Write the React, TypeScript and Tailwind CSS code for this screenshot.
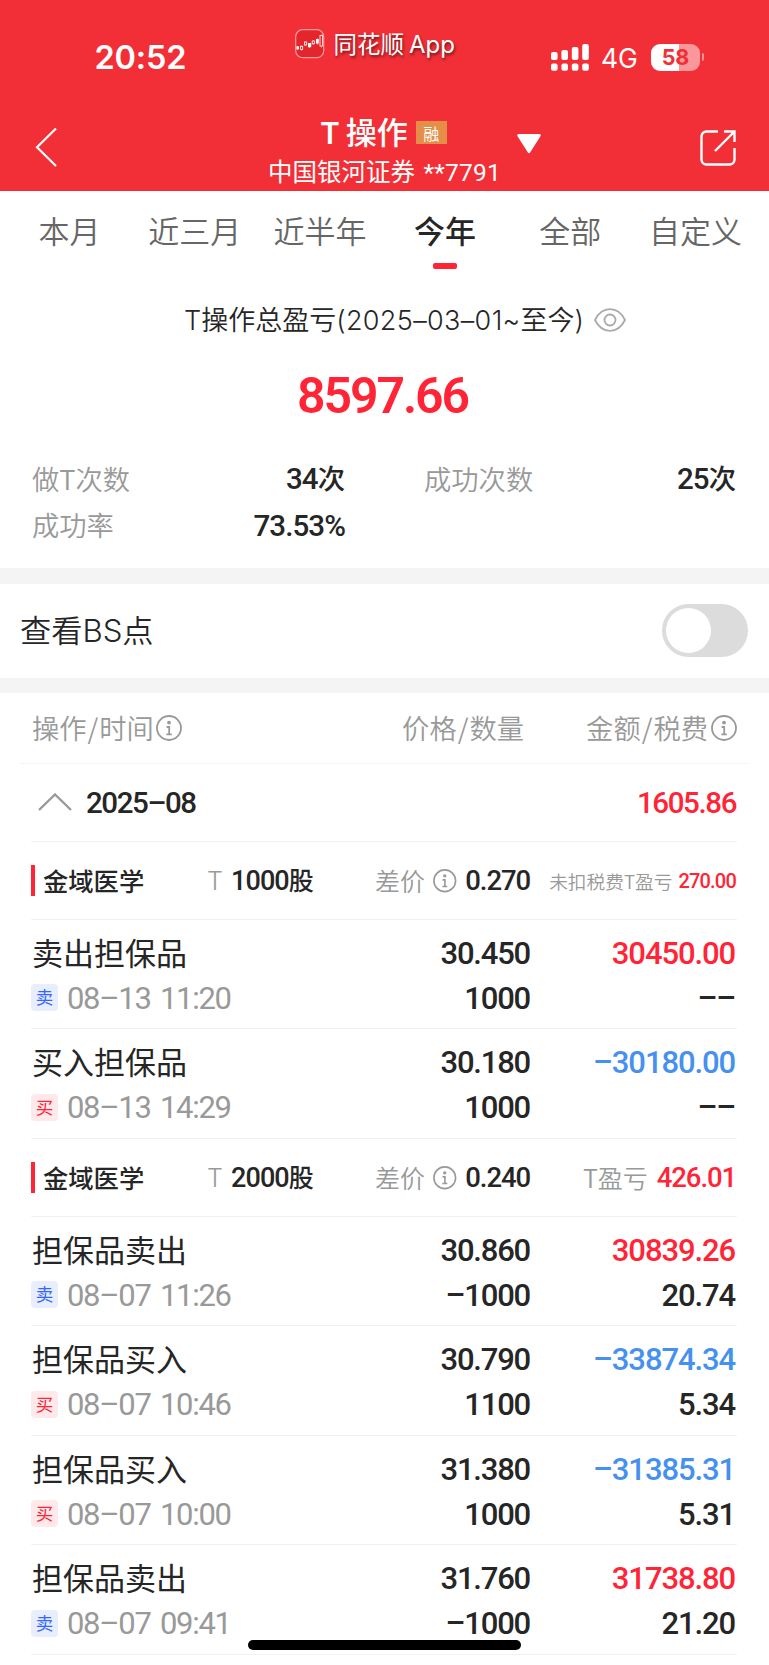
import { useState } from "react";
import clsx from "clsx";

type Side = "buy" | "sell";

interface Trade {
  title: string;
  side: Side;
  time: string;
  price: string;
  qty: string;
  amount: string;
  fee: string;
}

interface Group {
  name: string;
  shares: string;
  spread: string;
  profitLabel: string;
  profit: string;
  // groups without fees settled use a smaller label on the right
  compact?: boolean;
  trades: Trade[];
}

const tabs = ["本月", "近三月", "近半年", "今年", "全部", "自定义"];

const groups: Group[] = [
  {
    name: "金域医学",
    shares: "1000",
    spread: "0.270",
    profitLabel: "未扣税费T盈亏",
    profit: "270.00",
    compact: true,
    trades: [
      { title: "卖出担保品", side: "sell", time: "08–13 11:20", price: "30.450", qty: "1000", amount: "30450.00", fee: "––" },
      { title: "买入担保品", side: "buy", time: "08–13 14:29", price: "30.180", qty: "1000", amount: "–30180.00", fee: "––" },
    ],
  },
  {
    name: "金域医学",
    shares: "2000",
    spread: "0.240",
    profitLabel: "T盈亏",
    profit: "426.01",
    trades: [
      { title: "担保品卖出", side: "sell", time: "08–07 11:26", price: "30.860", qty: "–1000", amount: "30839.26", fee: "20.74" },
      { title: "担保品买入", side: "buy", time: "08–07 10:46", price: "30.790", qty: "1100", amount: "–33874.34", fee: "5.34" },
      { title: "担保品买入", side: "buy", time: "08–07 10:00", price: "31.380", qty: "1000", amount: "–31385.31", fee: "5.31" },
      { title: "担保品卖出", side: "sell", time: "08–07 09:41", price: "31.760", qty: "–1000", amount: "31738.80", fee: "21.20" },
    ],
  },
];

function InfoIcon({ className }: { className?: string }) {
  return (
    <svg viewBox="0 0 26 26" className={clsx("shrink-0 text-[#999]", className)} fill="none" stroke="currentColor">
      <circle cx="13" cy="13" r="12" strokeWidth="1.8" />
      <circle cx="13" cy="7.6" r="1.9" fill="currentColor" stroke="none" />
      <path d="M10.6 12h2.6v7M10.4 19.3h5.4" strokeWidth="1.8" />
    </svg>
  );
}

function StatusBar() {
  return (
    <div className="flex h-[116px] items-start font-['Inter','Noto_Sans_CJK_SC',sans-serif]">
      <div className="ml-[94.5px] mt-[38px] w-[200.5px] text-[32.5px] font-semibold leading-[40px] tracking-[-0.2px]">20:52</div>
      <svg viewBox="0 0 30 30" className="mt-[29px] size-[30px]">
        <rect x="0.7" y="0.7" width="28" height="28" rx="7" fill="#e3262b" stroke="#f79a9d" strokeWidth="1.2" />
        {/* candlesticks: wicks first, bodies on top */}
        <path d="M2.6 17v4M6.6 16.5v5M10.6 12.5v4M14.3 14.5v4.5M18.3 11v4.5M22.4 9.5v6M26.3 5.5v13" stroke="#fff" strokeWidth="0.6" />
        <g fill="#fff">
          <rect x="1.4" y="17.3" width="2.6" height="3" />
          <rect x="13" y="14" width="3.2" height="4.2" />
          <rect x="21" y="10" width="2.8" height="4.5" />
        </g>
        <g fill="#e3262b" stroke="#fff" strokeWidth="0.8">
          <rect x="5.5" y="17.3" width="2.2" height="3.2" />
          <rect x="9.5" y="13" width="2.2" height="3" />
          <rect x="17.2" y="12" width="2.2" height="2.8" />
          <rect x="25" y="6.5" width="2.5" height="10.5" />
        </g>
      </svg>
      <div className="ml-[8.5px] mt-[29px] w-[217.5px] text-[23.5px] leading-[32px] [text-shadow:1px_2px_3px_rgba(0,0,0,0.55)]">
        同花顺<span className="ml-[5px] text-[24px]">App</span>
      </div>
      <svg viewBox="0 0 38 27" className="mt-[44px] h-[27px] w-[38px]" fill="#fff">
        {[8, 6, 3, 0].map((top, i) => (
          <g key={top}>
            <rect x={i * 10.4} y={top} width="6.6" height={16 - top} rx="2" />
            <rect x={i * 10.4} y="19.5" width="6.6" height="7.2" rx="2" />
          </g>
        ))}
      </svg>
      <div className="ml-[12px] mt-[41px] w-[50px] text-[26.5px] leading-[34px]">4G</div>
      <div className="mt-[44px] flex h-[27px] w-[49px] items-center justify-center rounded-[9px] bg-[linear-gradient(90deg,#fff_58%,#f8989b_58%)] text-[21.5px] font-bold text-[#f22f37]">
        58
      </div>
      <div className="ml-[1.5px] mt-[53px] h-[8px] w-[2.5px] rounded-r-full bg-[#f8989b]" />
    </div>
  );
}

function NavBar() {
  return (
    <div className="flex h-[75px] items-start pl-[35px] pr-[33px]">
      <svg viewBox="0 0 22 40" className="mt-[11px] h-[40px] w-[22px]" fill="none" stroke="#fff" strokeWidth="2.2">
        <path d="M21 1.5 2 20.3 21 39" />
      </svg>
      <div className="ml-[211px] flex items-start">
        <div className="w-[249px]">
          <div className="flex h-[33px] items-center pl-[52px]">
            <span className="-mt-[2px] whitespace-nowrap text-[31px] font-medium leading-[33px]">
              <span className="mr-[6px] font-['Inter'] text-[30px] font-semibold">T</span>操作
            </span>
            <span className="ml-[8px] flex h-[23px] w-[31px] items-center justify-center bg-[#e48e48] text-[16px]">融</span>
          </div>
          <div className="mt-[6px] whitespace-nowrap text-[24.5px] leading-[32px]">
            中国银河证券 <span className="ml-[3px] font-['Roboto'] tracking-[0.2px]">**7791</span>
          </div>
        </div>
        <svg viewBox="0 0 24 20" className="mt-[18px] h-[20px] w-[24px]" fill="#fff">
          <path d="M1.5 0h21q2.2.6.8 2.4L13.3 18.3q-1.3 1.7-2.6 0L.7 2.4Q-.7.6 1.5 0Z" />
        </svg>
      </div>
      <svg viewBox="0 0 36 36" className="ml-auto mt-[14px] size-[36px]" fill="none" stroke="#fff" strokeWidth="2.4">
        <path d="M18 1.5H6.5a5 5 0 0 0-5 5v23a5 5 0 0 0 5 5h23a5 5 0 0 0 5-5V18" />
        <path d="M24 1.5h10.500V12M34 2 15 21" />
      </svg>
    </div>
  );
}

function Stat({ label, value, unit }: { label: string; value: string; unit?: string }) {
  return (
    <div className="flex h-[46.5px] items-center justify-between">
      <span className="-mt-[2px] font-[350] text-[#999]">{label}</span>
      <span className="font-medium">
        <span className="font-['Roboto'] text-[29.5px] tracking-[-0.9px]">{value}</span>
        {unit}
      </span>
    </div>
  );
}

function GroupHeader({ group }: { group: Group }) {
  return (
    <div className="flex h-[78px] items-center border-b border-[#f2f2f2] text-[25px]">
      <div className="h-[31px] w-[4px] bg-[#ff2436]" />
      <div className="ml-[8px] w-[164px] pt-px text-[25.3px] font-medium">{group.name}</div>
      <span className="w-[24px] pt-[3px] font-['Inter'] text-[25px] font-light text-[#999]">T</span>
      <div className="w-[82.5px] whitespace-nowrap pt-[2px] text-right font-medium">
        <span className="font-['Roboto'] text-[27px] tracking-[-0.9px]">{group.shares}</span>股
      </div>
      <div className="ml-[61.5px] flex w-[155px] items-center pt-[2px]">
        <span className="w-[58px] font-[350] text-[#999]">差价</span>
        <InfoIcon className="size-[23.5px]" />
        <span className="ml-auto font-['Roboto'] text-[27.5px] font-medium tracking-[-1.1px]">{group.spread}</span>
      </div>
      <div className={clsx("ml-auto flex items-center pr-px pt-[2px]", group.compact ? "gap-[6px] text-[18.7px]" : "gap-[9px] text-[25px]")}>
        <span className="whitespace-nowrap font-[350] text-[#999]">{group.profitLabel}</span>
        <span
          className={clsx(
            "font-['Roboto'] font-medium text-[#ff2436]",
            group.compact ? "text-[20px] tracking-[-0.8px]" : "text-[27.5px] tracking-[-1.1px]",
          )}
        >
          {group.profit}
        </span>
      </div>
    </div>
  );
}

function TradeRow({ trade }: { trade: Trade }) {
  const sell = trade.side === "sell";
  return (
    <div className="flex h-[109.5px] border-b border-[#f2f2f2] pt-[11px]">
      <div className="w-[300px]">
        <div className="h-[44px] pl-px text-[31px] leading-[42px]">{trade.title}</div>
        <div className="flex h-[46px] items-center">
          <span
            className={clsx(
              "flex size-[27px] items-center justify-center rounded-[4px] text-[17.5px]",
              sell ? "bg-[#e9eeff] text-[#3366ff]" : "bg-[#ffe9eb] text-[#ff2436]",
            )}
          >
            {sell ? "卖" : "买"}
          </span>
          <span className="ml-[9px] pt-[3px] font-['Roboto'] text-[31px] tracking-[-1.3px] text-[#999] [word-spacing:3px]">
            {trade.time}
          </span>
        </div>
      </div>
      <div className="w-[199px] text-right font-['Roboto'] text-[31px] font-medium tracking-[-1.2px]">
        <div className="h-[44px] leading-[45px]">{trade.price}</div>
        <div className="h-[46px] leading-[48px]">{trade.qty}</div>
      </div>
      <div className="flex-1 pr-[2px] text-right font-['Roboto'] text-[31px] font-medium tracking-[-1.1px]">
        <div className={clsx("h-[44px] leading-[45px]", sell ? "text-[#ff2436]" : "text-[#4691ee]")}>{trade.amount}</div>
        <div className="h-[46px] leading-[48px]">{trade.fee}</div>
      </div>
    </div>
  );
}

export default function App() {
  const [active, setActive] = useState("今年");
  const [showBs, setShowBs] = useState(false);

  return (
    <div className="relative h-[1665px] w-[769px] overflow-hidden bg-white font-['Noto_Sans_CJK_SC',sans-serif] text-[#262626]">
      <header className="h-[191px] bg-[#f22f37] text-white">
        <StatusBar />
        <NavBar />
      </header>

      <nav className="grid h-[89px] grid-cols-6 pl-[7px] pr-[11px]">
        {tabs.map((tab) => (
          <button key={tab} className="flex flex-col items-center pt-[16px]" onClick={() => setActive(tab)}>
            <span
              className={clsx(
                "whitespace-nowrap text-[31px] leading-[46px]",
                tab === active ? "font-medium" : "font-[350] text-[#666]",
              )}
            >
              {tab}
            </span>
            {tab === active && <span className="mt-[10px] h-[6px] w-[24px] rounded-[2px] bg-[#ff2436]" />}
          </button>
        ))}
      </nav>

      <section className="h-[288px]">
        <div className="flex h-[80px] items-center pl-[184px] text-[27px] font-[350]">
          <span className="whitespace-nowrap">
            <span className="font-['Inter']">T</span>操作总盈亏
            <span className="font-['Inter'] tracking-[0.35px]">(2025–03–01~</span>至今
            <span className="font-['Inter']">)</span>
          </span>
          <svg viewBox="0 0 32 24" className="ml-[10px] h-[24px] w-[32px]" fill="none" stroke="#aaa" strokeWidth="1.8">
            <path d="M1 12C4.5 5 9.5 1.2 16 1.2S27.5 5 31 12c-3.5 7-8.5 10.8-15 10.8S4.5 19 1 12Z" />
            <circle cx="16" cy="12" r="5.5" />
          </svg>
        </div>
        <div className="h-[96px] pr-[4px] pt-[6px] text-center font-['Roboto'] text-[50px] font-semibold leading-[60px] tracking-[-2.1px] text-[#ff2436]">
          8597.66
        </div>
        <div className="grid grid-cols-[313px_312px] gap-x-[79px] pl-[32px] text-[27.3px]">
          <Stat label="做T次数" value="34" unit="次" />
          <Stat label="成功次数" value="25" unit="次" />
          <Stat label="成功率" value="73.53%" />
        </div>
      </section>

      <div className="h-[16px] bg-[#f4f4f4]" />
      <section className="flex h-[93.5px] items-center justify-between pl-[20px] pr-[21px]">
        <span className="text-[31.2px] font-[350]">
          查看<span className="font-['Inter']">BS</span>点
        </span>
        <button
          role="switch"
          aria-checked={showBs}
          onClick={() => setShowBs(!showBs)}
          className={clsx(
            "flex h-[53px] w-[86px] items-center rounded-full px-[4px]",
            showBs ? "justify-end bg-[#ff2436]" : "bg-[#dcdcdc]",
          )}
        >
          <span className="size-[45px] rounded-full bg-white" />
        </button>
      </section>
      <div className="h-[15.5px] bg-[#f4f4f4]" />

      <section>
        <div className="mx-[20px] flex h-[70.5px] items-center border-b border-[#f5f5f5] pl-[12px] pr-[12px] text-[27.3px] font-[350] text-[#999]">
          <span className="flex w-[292px] items-center gap-[2px]">
            <span>
              操作<span className="mx-[1px]">/</span>时间
            </span>
            <InfoIcon className="size-[26px]" />
          </span>
          <span className="w-[200px] text-right">
            价格<span className="mx-[1px]">/</span>数量
          </span>
          <span className="ml-auto flex items-center gap-[3px]">
            <span>
              金额<span className="mx-[1px]">/</span>税费
            </span>
            <InfoIcon className="size-[26px]" />
          </span>
        </div>

        <div className="ml-[31px] mr-[32px]">
          <div className="flex h-[78px] items-center border-b border-[#f2f2f2] pl-[7px] pr-px font-['Roboto'] text-[29.5px] font-medium tracking-[-1.4px]">
            <svg viewBox="0 0 34 18" className="h-[18px] w-[34px]" fill="none" stroke="#999" strokeWidth="2.4">
              <path d="M1 17 17 1.5 33 17" />
            </svg>
            <span className="ml-[14px] pt-[3px]">2025–08</span>
            <span className="ml-auto pt-[3px] text-[#ff2436]">1605.86</span>
          </div>
          {groups.map((group) => (
            <div key={group.shares}>
              <GroupHeader group={group} />
              {group.trades.map((trade) => (
                <TradeRow key={trade.time} trade={trade} />
              ))}
            </div>
          ))}
        </div>
      </section>

      {/* home indicator sits over the list */}
      <div className="absolute bottom-[15px] left-[248px] h-[10px] w-[273px] rounded-full bg-black" />
    </div>
  );
}
